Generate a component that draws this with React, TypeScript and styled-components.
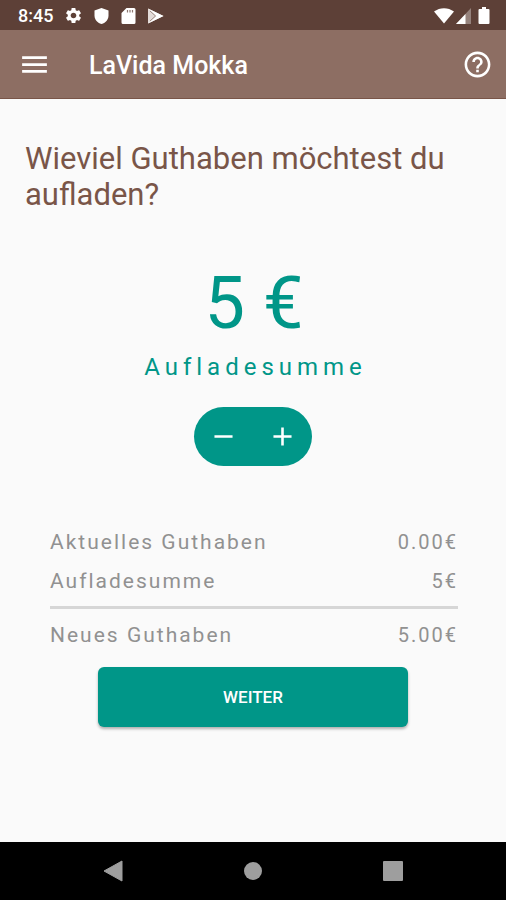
import React, { useState } from 'react';
import styled, { createGlobalStyle } from 'styled-components';
import { MdSettings, MdMenu, MdHelpOutline, MdAdd, MdRemove } from 'react-icons/md';

const GlobalStyle = createGlobalStyle`
  *, *::before, *::after { box-sizing: border-box; }
  body {
    margin: 0;
    background: #fafafa;
    font-family: Roboto, "Liberation Sans", sans-serif;
  }
  h1, h2, p, dl, dd { margin: 0; font-weight: 400; }
  svg { display: block; }
`;

const Screen = styled.div`
  display: flex;
  flex-direction: column;
  min-height: 100vh;
  background: #fafafa;
`;

const StatusBar = styled.div`
  display: flex;
  align-items: center;
  justify-content: space-between;
  height: 30px;
  padding: 1px 16px 0 18px;
  background: #5d4037;
  color: #fff;
`;

const StatusGroup = styled.div<{ $gap: number }>`
  display: flex;
  align-items: center;
  gap: ${({ $gap }) => $gap}px;
`;

const Clock = styled.time`
  font-size: 18px;
  font-weight: 500;
  line-height: 28px;
`;

const AppBar = styled.header`
  display: flex;
  align-items: center;
  gap: 38px;
  height: 69px;
  padding: 0 13px 0 18px;
  border-bottom: 1px solid #795548;
  background: #8d6e63;
  color: #fff;
`;

const IconButton = styled.button`
  display: grid;
  place-items: center;
  flex: none;
  padding: 0;
  border: 0;
  background: none;
  color: #fff;
  cursor: pointer;
`;

const AppTitle = styled.h1`
  flex: 1;
  padding-top: 3px;
  font-size: 25px;
  font-weight: 500;
  line-height: 32px;
`;

const Content = styled.main`
  flex: 1;
  padding: 42px 25px 24px;
`;

const Question = styled.h2`
  color: #795548;
  font-size: 31px;
  line-height: 36px;
`;

const AmountPicker = styled.section`
  display: flex;
  flex-direction: column;
  align-items: center;
  margin-top: 49px;
  color: #009688;
`;

const Amount = styled.output`
  padding-left: 2px;
  font-size: 72px;
  line-height: 84px;
`;

const AmountLabel = styled.p`
  margin-top: 5px;
  padding-left: 5px;
  font-size: 24px;
  line-height: 32px;
  letter-spacing: 5px;
`;

const Stepper = styled.div`
  display: flex;
  margin-top: 24px;
  overflow: hidden;
  border-radius: 30px;
  background: #009688;
`;

const StepButton = styled(IconButton)`
  width: 59px;
  height: 59px;
`;

const Summary = styled.dl`
  margin: 57px 23px 0 25px;
  color: #919191;
  font-size: 21px;
  line-height: 39px;
  letter-spacing: 2px;
`;

const SummaryRow = styled.div<{ $total?: boolean }>`
  display: flex;
  justify-content: space-between;
  ${({ $total }) => $total && `
    margin-top: 5px;
    padding-top: 7px;
    border-top: 3px solid #d6d6d6;
  `}
`;

const SummaryValue = styled.dd`
  font-size: 20px;
`;

const NextButton = styled.button`
  display: block;
  width: 68%;
  height: 60px;
  margin: 12px auto 0;
  border: 0;
  border-radius: 6px;
  background: #009688;
  box-shadow: 0 2px 3px rgba(0, 0, 0, 0.3);
  color: #fff;
  font-family: inherit;
  font-size: 17px;
  font-weight: 500;
  cursor: pointer;
`;

const SystemNav = styled.nav`
  display: flex;
  justify-content: center;
  gap: 112px;
  height: 58px;
  background: #000;
`;

const NavButton = styled(IconButton)`
  width: 28px;
  color: #9e9e9e;
`;

const ShieldIcon = () => (
  <svg width="17" height="18" viewBox="0 0 17 18" fill="currentColor" aria-hidden="true">
    <path d="M8.500 1 1.500 3.500v5c0 4 2.500 7.200 7 8.500 4.500-1.300 7-4.500 7-8.500v-5z" />
  </svg>
);

const SdCardIcon = () => (
  <svg width="17" height="18" viewBox="0 0 17 18" aria-hidden="true">
    <path
      fill="currentColor"
      d="M6.500 1H14a1.500 1.500 0 0 1 1.500 1.500v13A1.500 1.500 0 0 1 14 17H3a1.500 1.500 0 0 1-1.500-1.500V6z"
    />
    <path d="M7.500 3v2.500M10 3v2.500M12.500 3v2.500" stroke="#8d7770" strokeWidth="1.200" />
  </svg>
);

const PlayIcon = () => (
  <svg width="17" height="18" viewBox="0 0 17 18" aria-hidden="true">
    <path d="M1 1.500v15L16.500 9z" fill="#e3dbd8" />
    <path d="M1 1.500 16.500 9 1 16.500 9.500 9z" fill="#fff" />
    <path d="m3 4 5.500 5L3 14" fill="none" stroke="#a08c85" />
  </svg>
);

const WifiIcon = () => (
  <svg width="20" height="16" viewBox="0 0 20 16" fill="currentColor" aria-hidden="true">
    <path d="M0 3.500C6-1 14-1 20 3.500L10 15.500z" />
  </svg>
);

const SignalIcon = () => (
  <svg width="15" height="16" viewBox="0 0 15 16" fill="currentColor" aria-hidden="true">
    <path d="M15 0v16H0z" opacity="0.35" />
    <path d="M9.500 6v10H0z" />
  </svg>
);

const BatteryIcon = () => (
  <svg width="12" height="17" viewBox="0 0 12 17" fill="currentColor" aria-hidden="true">
    <path d="M4 0h4v2h2.500Q11.500 2 11.500 3v13q0 1-1 1h-9q-1 0-1-1V3q0-1 1-1H4z" />
  </svg>
);

const formatTotal = (value: number) => `${value.toFixed(2)}€`;

export default function App() {
  const balance = 0;
  const [amount, setAmount] = useState(5);

  return (
    <>
      <GlobalStyle />
      <Screen>
        <StatusBar>
          <StatusGroup $gap={11}>
            <Clock>8:45</Clock>
            <StatusGroup $gap={10}>
              <MdSettings size={19} />
              <ShieldIcon />
              <SdCardIcon />
              <PlayIcon />
            </StatusGroup>
          </StatusGroup>
          <StatusGroup $gap={7}>
            <StatusGroup $gap={2}>
              <WifiIcon />
              <SignalIcon />
            </StatusGroup>
            <BatteryIcon />
          </StatusGroup>
        </StatusBar>

        <AppBar>
          <IconButton type="button" aria-label="Menü">
            <MdMenu size={33} />
          </IconButton>
          <AppTitle>LaVida Mokka</AppTitle>
          <IconButton type="button" aria-label="Hilfe">
            <MdHelpOutline size={31} />
          </IconButton>
        </AppBar>

        <Content>
          <Question>Wieviel Guthaben möchtest du aufladen?</Question>

          <AmountPicker>
            <Amount>{amount} €</Amount>
            <AmountLabel>Aufladesumme</AmountLabel>
            <Stepper>
              <StepButton type="button" aria-label="Weniger" onClick={() => setAmount((a) => Math.max(5, a - 5))}>
                <MdRemove size={31} />
              </StepButton>
              <StepButton type="button" aria-label="Mehr" onClick={() => setAmount((a) => a + 5)}>
                <MdAdd size={31} />
              </StepButton>
            </Stepper>
          </AmountPicker>

          <Summary>
            <SummaryRow>
              <dt>Aktuelles Guthaben</dt>
              <SummaryValue>{formatTotal(balance)}</SummaryValue>
            </SummaryRow>
            <SummaryRow>
              <dt>Aufladesumme</dt>
              <SummaryValue>{amount}€</SummaryValue>
            </SummaryRow>
            <SummaryRow $total>
              <dt>Neues Guthaben</dt>
              <SummaryValue>{formatTotal(balance + amount)}</SummaryValue>
            </SummaryRow>
          </Summary>

          <NextButton type="button">WEITER</NextButton>
        </Content>

        <SystemNav aria-label="System">
          <NavButton type="button" aria-label="Zurück">
            <svg width="20" height="22" viewBox="0 0 20 22" fill="currentColor">
              <path d="M19 1v20L1 11z" stroke="currentColor" strokeLinejoin="round" />
            </svg>
          </NavButton>
          <NavButton type="button" aria-label="Startseite">
            <svg width="18" height="18" viewBox="0 0 18 18" fill="currentColor">
              <circle cx="9" cy="9" r="9" />
            </svg>
          </NavButton>
          <NavButton type="button" aria-label="Übersicht">
            <svg width="20" height="20" viewBox="0 0 20 20" fill="currentColor">
              <rect width="20" height="20" rx="1" />
            </svg>
          </NavButton>
        </SystemNav>
      </Screen>
    </>
  );
}
